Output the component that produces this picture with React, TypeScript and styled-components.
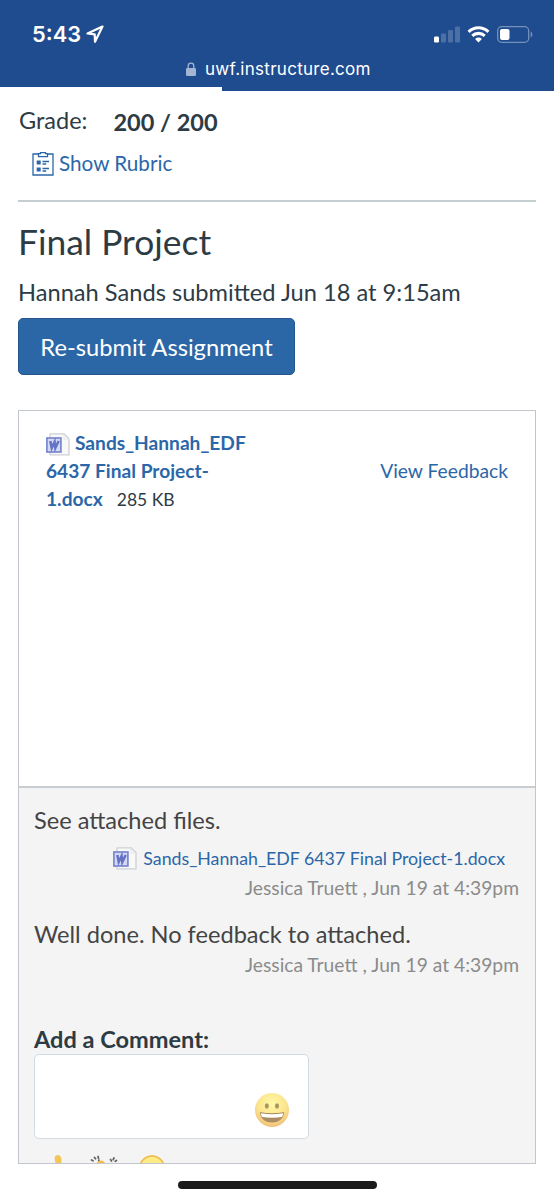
import React from "react";
import styled, { createGlobalStyle } from "styled-components";

const GlobalStyle = createGlobalStyle`
  *, *::before, *::after { box-sizing: border-box; }
  html, body { margin: 0; background: #fff; }
  body { font-family: Lato, "Liberation Sans", sans-serif; color: #2d3b45; }
  h1, p { margin: 0; font-weight: 400; }
  svg { display: block; flex: none; }
`;

const Screen = styled.div`
  width: 554px;
  height: 1200px;
  overflow: hidden;
  display: flex;
  flex-direction: column;
  background: #fff;
`;

const BrowserHeader = styled.header`
  position: relative;
  flex: none;
  height: 91px;
  background: #1f4b8f;
  color: #fff;
  font-family: Inter, "Liberation Sans", sans-serif;
`;

const StatusBar = styled.div`
  display: flex;
  justify-content: space-between;
  align-items: center;
  height: 56px;
  padding: 12px 21px 0 32px;
`;

const Clock = styled.div`
  display: flex;
  align-items: center;
  gap: 5px;
  font-size: 21.8px;
  font-weight: 600;
  line-height: 26px;
`;

const Indicators = styled.div`
  display: flex;
  align-items: center;
  gap: 7px;
`;

const AddressBar = styled.div`
  display: flex;
  align-items: center;
  gap: 9px;
  height: 25px;
  padding-left: 186px;
  font-size: 17px;
  letter-spacing: 0.28px;
`;

const LoadProgress = styled.div`
  position: absolute;
  left: 0;
  bottom: 0;
  width: 222px;
  height: 4px;
  background: #fff;
`;

const Page = styled.main`
  flex: none;
  display: flex;
  flex-direction: column;
  width: 518px;
  margin-left: 18px;
`;

const GradeRow = styled.div`
  display: flex;
  gap: 26px;
  padding: 14px 0 0 1px;
  height: 51px;
  font-size: 23.5px;
  line-height: 30px;
`;

const GradeValue = styled.strong`
  padding-top: 2px;
  font-weight: 700;
`;

const RubricLink = styled.a`
  display: flex;
  align-items: center;
  gap: 5px;
  height: 42px;
  padding-left: 14px;
  font-size: 20.7px;
  color: #2b67a8;
  svg { margin-top: 2px; }
`;

const Divider = styled.div`
  height: 2px;
  margin-top: 16px;
  background: #c5ced1;
`;

const Title = styled.h1`
  margin-top: 16px;
  font-size: 35.4px;
  line-height: 48px;
`;

const SubmittedLine = styled.p`
  margin-top: 11px;
  font-size: 23.65px;
  line-height: 30px;
`;

const ResubmitButton = styled.button`
  align-self: flex-start;
  width: 277px;
  height: 57px;
  margin-top: 11px;
  padding: 0;
  border: 1px solid #24578f;
  border-radius: 5px;
  background: #2b67a6;
  color: #fff;
  font: 400 23.7px Lato, sans-serif;
`;

const SubmissionCard = styled.section`
  display: flex;
  flex-direction: column;
  height: 754px;
  margin-top: 35px;
  border: 1px solid #c1c7cc;
  overflow: hidden;
`;

const FileRow = styled.div`
  display: flex;
  flex: none;
  align-items: flex-start;
  justify-content: space-between;
  height: 375px;
  padding: 18px 27px 0;
  font-size: 19.15px;
  line-height: 28px;
`;

const FileInfo = styled.div`
  width: 215px;
`;

const FileName = styled.a`
  font-weight: 700;
  color: #2b67a8;
  svg { display: inline-block; vertical-align: -6px; margin-right: 5px; }
`;

const FileSize = styled.span`
  margin-left: 14px;
  font-size: 17.5px;
`;

const FeedbackLink = styled.a`
  padding-top: 28px;
  font-size: 19.25px;
  color: #2b67a8;
`;

const Comments = styled.div`
  flex: 1;
  display: flex;
  flex-direction: column;
  padding: 17px 16px 0 15px;
  border-top: 2px solid #c7cdd1;
  background: #f4f4f4;
`;

const CommentText = styled.p`
  font-size: 23.6px;
  line-height: 30px;
  color: #444;
`;

const Attachment = styled.a`
  display: flex;
  align-items: center;
  justify-content: flex-end;
  gap: 6px;
  height: 28px;
  margin-top: 9px;
  padding-right: 14px;
  font-size: 17.75px;
  color: #2b67a8;
`;

const Byline = styled.p<{ $gap: number }>`
  margin-bottom: ${(p) => p.$gap}px;
  text-align: right;
  font-size: 19.25px;
  line-height: 31px;
  color: #8b8b8b;
`;

const CommentLabel = styled.label`
  font-size: 23.55px;
  font-weight: 700;
  line-height: 30px;
`;

const CommentBox = styled.div`
  display: flex;
  flex: none;
  align-items: flex-end;
  justify-content: flex-end;
  width: 275px;
  height: 85px;
  padding: 0 18px 10px 0;
  border: 1px solid #d3dbe2;
  border-radius: 5px;
  background: #fff;
`;

const EmojiRow = styled.div`
  display: flex;
  margin-top: 16px;
`;

const HomeIndicator = styled.div`
  flex: none;
  align-self: center;
  width: 199px;
  height: 8px;
  margin-top: 17px;
  border-radius: 4px;
  background: #1b1b1b;
`;

const LocationIcon = () => (
  <svg width="18" height="18" viewBox="0 0 18 18" fill="none" stroke="#fff" strokeWidth="2.2" strokeLinejoin="round">
    <path d="M16.5 1.5 1.5 8.5l7.2.8.3 7.5z" />
  </svg>
);

const SignalIcon = () => (
  <svg width="26" height="17" viewBox="0 0 26 17" fill="#fff">
    <rect x="0" y="10.5" width="5" height="6" rx="1.3" />
    <g opacity="0.2">
      <rect x="7" y="7.5" width="5" height="9" rx="1.3" />
      <rect x="14" y="4" width="5" height="12.5" rx="1.3" />
      <rect x="21" y="0.5" width="5" height="16" rx="1.3" />
    </g>
  </svg>
);

const WifiIcon = () => (
  <svg width="23" height="17" viewBox="0 0 22 17" fill="none" stroke="#fff" strokeWidth="3.1">
    <path d="M1.1 5.9a14 14 0 0 1 19.8 0" />
    <path d="M4.8 9.9a8.8 8.8 0 0 1 12.4 0" />
    <path d="M7.6 13a4.8 4.8 0 0 1 6.8 0L11 16.5z" fill="#fff" stroke="none" />
  </svg>
);

const BatteryIcon = () => (
  <svg width="36" height="17" viewBox="0 0 36 17">
    <rect x="0.7" y="0.7" width="31" height="15.6" rx="4" fill="none" stroke="#7291bb" strokeWidth="1.3" />
    <path d="M33.7 5.5c2.2 1 2.2 5 0 6z" fill="#7291bb" />
    <rect x="3" y="3" width="9.5" height="11" rx="2" fill="#fff" />
  </svg>
);

const LockIcon = () => (
  <svg width="10" height="14" viewBox="0 0 10 14">
    <path d="M2.2 6.5V4a2.8 2.8 0 0 1 5.6 0v2.5" fill="none" stroke="#a3b5d3" strokeWidth="1.3" />
    <rect x="0" y="6" width="10" height="8" rx="1.3" fill="#a3b5d3" />
  </svg>
);

const RubricIcon = () => (
  <svg width="22" height="24" viewBox="0 0 22 24" fill="none" stroke="#2b67a8" strokeWidth="1.3">
    <path d="M6.5 2H1v21h20V2h-5.500" />
    <path d="M6.5 4.7V1.700h2V.7h5v1h2v3z" />
    <path d="M10.5 9.5h6.5M10.5 12h3.700M10.5 16.5h6.5M10.5 19h3.700" />
    <path d="M4.7 8.5h4v4h-4zM4.7 15.5h4v4h-4z" fill="#2b67a8" stroke="none" />
  </svg>
);

const WordIcon = () => (
  <svg width="24" height="23" viewBox="0 0 24 23" fill="none">
    <path d="M4 .8h14l5 5v16H4z" fill="#f9f9fa" stroke="#cecfd2" strokeWidth="1.3" strokeLinejoin="round" />
    <path d="M18 1v5h5" stroke="#e3e4e6" />
    <rect x="0.9" y="5" width="14" height="14" fill="#d3d9f4" stroke="#7a87cf" strokeWidth="1.7" />
    <path d="M4.3 8 5.7 15 8.6 9 9.3 15l3.4-7" stroke="#6473c4" strokeWidth="2.5" />
  </svg>
);

const GrinIcon = () => (
  <svg width="36" height="36" viewBox="0 0 36 36">
    <defs>
      <radialGradient id="face" cx="0.5" cy="0.32" r="0.7">
        <stop offset="0" stopColor="#fff9a5" />
        <stop offset="0.6" stopColor="#fbe48d" />
        <stop offset="1" stopColor="#efbd79" />
      </radialGradient>
    </defs>
    <circle cx="18" cy="18" r="17" fill="url(#face)" />
    <ellipse cx="12.8" cy="14" rx="2" ry="2.7" fill="#aa9461" />
    <ellipse cx="23" cy="14" rx="2" ry="2.7" fill="#aa9461" />
    <path d="M6 20c7 1.6 17 1.6 24 0 0 6-4.5 10.5-12 10.5S6 26 6 20z" fill="#aa8b64" />
    <path d="M7 21.2c7 1.3 15 1.3 22 0 0 1.5-.5 3-1.2 3.8-6 1-13.6 1-19.6 0C7.5 24.2 7 22.7 7 21.2z" fill="#fff" />
  </svg>
);

const ReactionsIcon = () => (
  <svg width="140" height="34" viewBox="0 0 140 34">
    <path d="M21 3c0-3.5 6-3.5 6 1V20h-4c0-6-1-11-2-17z" fill="#f6c653" stroke="#eab54a" strokeWidth=".6" />
    <g stroke="#666" strokeWidth="1.8" strokeLinecap="round">
      <path d="m57.5 5 1.5.8M60.5 2.5l1 1.2M64 1.5l.5 1.7M76.5 4.5l1 1.500M80 3l-.8 1.500M82.5 5.500l-1.200.8M65 5l-.3.8" />
    </g>
    <path d="M61 9c2-1 3-3.5 6-3.5S71 8 72 10v10H59z" fill="#f3bd4c" />
    <circle cx="118" cy="13.5" r="12.5" fill="#fdeb86" stroke="#efb641" strokeWidth="1.5" />
  </svg>
);

export default function App() {
  return (
    <Screen>
      <GlobalStyle />
      <BrowserHeader>
        <StatusBar>
          <Clock>5:43 <LocationIcon /></Clock>
          <Indicators><SignalIcon /><WifiIcon /><BatteryIcon /></Indicators>
        </StatusBar>
        <AddressBar><LockIcon />uwf.instructure.com</AddressBar>
        <LoadProgress />
      </BrowserHeader>
      <Page>
        <GradeRow><span>Grade:</span><GradeValue>200 / 200</GradeValue></GradeRow>
        <RubricLink><RubricIcon />Show Rubric</RubricLink>
        <Divider />
        <Title>Final Project</Title>
        <SubmittedLine>Hannah Sands submitted Jun 18 at 9:15am</SubmittedLine>
        <ResubmitButton>Re-submit Assignment</ResubmitButton>
        <SubmissionCard>
          <FileRow>
            <FileInfo>
              <FileName><WordIcon />Sands_Hannah_EDF 6437 Final Project-1.docx</FileName>
              <FileSize>285 KB</FileSize>
            </FileInfo>
            <FeedbackLink>View Feedback</FeedbackLink>
          </FileRow>
          <Comments>
            <CommentText>See attached files.</CommentText>
            <Attachment><WordIcon />Sands_Hannah_EDF 6437 Final Project-1.docx</Attachment>
            <Byline $gap={16}>Jessica Truett , Jun 19 at 4:39pm</Byline>
            <CommentText>Well done. No feedback to attached.</CommentText>
            <Byline $gap={44}>Jessica Truett , Jun 19 at 4:39pm</Byline>
            <CommentLabel>Add a Comment:</CommentLabel>
            <CommentBox><GrinIcon /></CommentBox>
            <EmojiRow><ReactionsIcon /></EmojiRow>
          </Comments>
        </SubmissionCard>
      </Page>
      <HomeIndicator />
    </Screen>
  );
}
